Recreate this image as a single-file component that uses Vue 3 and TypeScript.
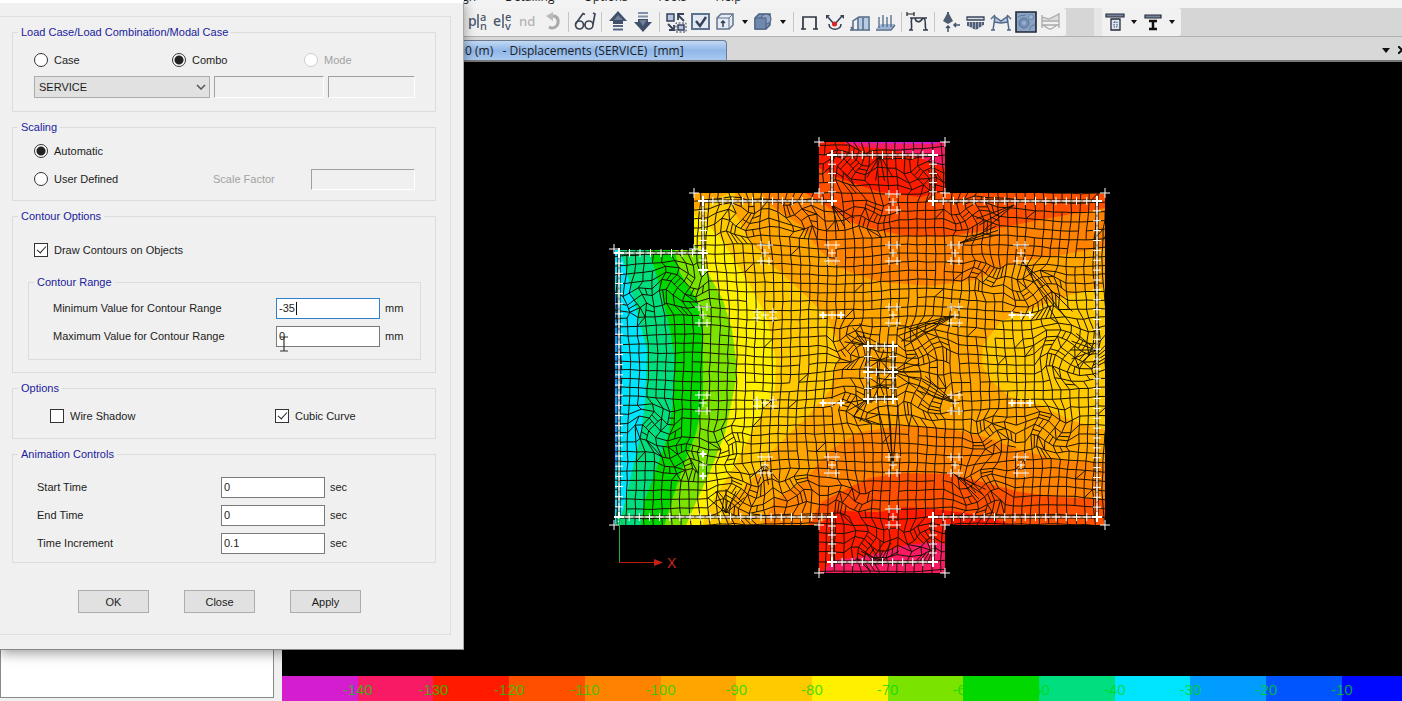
<script setup lang="ts">
import { ref } from 'vue'

type Point = [number, number]

/* ---------- dialog state ---------- */
const caseKind = ref('combo')
const scaling = ref('automatic')
const selectedCase = ref('SERVICE')
const drawContours = ref(true)
const wireShadow = ref(false)
const cubicCurve = ref(true)
const rangeMin = ref('-35')
const rangeMax = ref('0')
const times = ref([
  { id: 'start-time', label: 'Start Time', value: '0' },
  { id: 'end-time', label: 'End Time', value: '0' },
  { id: 'time-increment', label: 'Time Increment', value: '0.1' },
])
const menus = ['Design', 'Detailing', 'Options', 'Tools', 'Help']

/* ---------- toolbar ---------- */
interface Tool { kind: 'icon' | 'sep' | 'caret'; name?: string; art?: string }
const sep: Tool = { kind: 'sep' }
const caret: Tool = { kind: 'caret' }
const icon = (name: string, art: string): Tool => ({ kind: 'icon', name, art })
const glyph = (x: number, y: number, size: number, s: string, color = '#4b566b') =>
  `<text x="${x}" y="${y}" font-size="${size}" font-family="Noto Sans, sans-serif" font-weight="500" fill="${color}">${s}</text>`

const tools: Tool[] = [
  icon('Plan view', glyph(3, 16, 14, 'p') + '<path d="M13 4v14" stroke="#4b566b" stroke-width="1.5"/>' + glyph(15, 11, 11, 'a') + glyph(15, 20, 11, 'n')),
  icon('Elevation view', glyph(3, 16, 14, 'e') + '<path d="M13 4v14" stroke="#4b566b" stroke-width="1.5"/>' + glyph(15, 11, 11, 'e') + glyph(15, 20, 11, 'v')),
  icon('Named display', glyph(4, 16, 13, 'nd', '#b4b4b4')),
  icon('Undo', '<path d="M10 7c5-3 9 1 8 6s-6 6-9 4" fill="none" stroke="#aaa" stroke-width="3"/><path d="M6 6l7-4v9z" fill="#bbb"/>'),
  sep,
  icon('Perspective', '<g fill="none" stroke="#3d4656" stroke-width="1.7"><circle cx="6.5" cy="15" r="4"/><circle cx="16" cy="15" r="4"/><path d="M2.5 14L10 3.5l2 1M20 14l2-10-2-1M10.5 15h1.5"/></g>'),
  sep,
  icon('Move up in list', '<path d="M12 1l9 10h-4v3H7v-3H3z" fill="#40506b"/><path d="M12 5l5 5H8z" fill="#6e7e99"/><path d="M7 16h10M7 19.5h10" stroke="#566883" stroke-width="2"/>'),
  icon('Move down in list', '<path d="M12 22l9-10h-4V9H7v3H3z" fill="#40506b"/><path d="M8 10h8l-4 6z" fill="#6e7e99"/><path d="M7 3h10M7 6.5h10" stroke="#7e90aa" stroke-width="2"/>'),
  sep,
  icon('Object shrink', '<path d="M3 4h7v7H3zM14 15h6v5h-6z" fill="#b7c6de" stroke="#35425a" stroke-width="1.5"/><path d="M20 11l-6-6m0 5V4h6M4 14l6 6m0-5v5H5" fill="none" stroke="#35425a" stroke-width="1.8"/><path d="M12 22h10V13H12z" fill="none" stroke="#35425a" stroke-dasharray="2 1.5"/>'),
  icon('Set display options', '<rect x="3" y="4" width="17" height="15" fill="#e3e9f2" stroke="#5d7191" stroke-width="2"/><path d="M7 11l4 5 6-9" fill="none" stroke="#35425a" stroke-width="2.5"/>'),
  icon('Object view', '<path d="M3 8l4-4h12v11l-4 4H3z" fill="#e5ebf3" stroke="#60728e" stroke-width="1.5"/><path d="M3 8h12v11M15 8l4-4" fill="none" stroke="#60728e"/><path d="M9 17v-6m-2 2l2-2 2 2" fill="none" stroke="#333d50" stroke-width="1.5"/>'),
  caret,
  icon('Extruded view', '<path d="M3 8l4-4h11v11l-4 4H3z" fill="#7c93b7" stroke="#4a5f80" stroke-width="1.5"/><circle cx="14" cy="9" r="5" fill="#8fa4c4" stroke="#4a5f80"/><path d="M3 8h11v11H3z" fill="#7188ad" stroke="#4a5f80"/>'),
  caret,
  sep,
  icon('Undeformed shape', '<path d="M5 19V7h13v12M3 19h5M15 19h5" fill="none" stroke="#2e3441" stroke-width="1.7"/>'),
  icon('Joint loads', '<path d="M4 6l7 8M19 6l-7 8M6 14c0 7 12 7 12 0" fill="none" stroke="#35425a" stroke-width="1.6"/><path d="M3 5h4l-4 4zM21 5h-4l4 4z" fill="#35425a"/><circle cx="11.5" cy="14" r="2.5" fill="#d22"/>'),
  icon('Frame loads', '<path d="M10 7h10v12H10z" fill="#b8cbe5"/><path d="M2 20h20M5 20v-9l6-4h10v13M10 20V8M15 20V8M3 17l2 3" fill="none" stroke="#526987" stroke-width="1.5"/>'),
  icon('Shell loads', '<path d="M3 19l5-5h14l-4 5z" fill="#9eb5d5"/><path d="M3 20h15l4-5M6 7v11M10 5v12M14 7v10M18 5v12" fill="none" stroke="#526987" stroke-width="1.3"/>'),
  sep,
  icon('Deformed shape', '<path d="M1 4h7M1 2v4M8 2v4" stroke="#222" fill="none" stroke-width="1.2"/><path d="M4 8h17M6 8c-2 5 1 6-1 12M18 8c3 4 0 7 2 12M9 8c1 5 5 5 8 0M3 20h4M17 20h5" fill="none" stroke="#333c4c" stroke-width="1.6"/>'),
  sep,
  icon('Support reactions', '<path d="M9 2v10" stroke="#222" stroke-width="1.5"/><path d="M9 2l-5 9 5 3 5-3z" fill="#4e5c70"/><path d="M9 22v-6m-2 2l2-2 2 2M21 15h-6m2-2l-2 2 2 2" fill="none" stroke="#43536c" stroke-width="1.5"/>'),
  icon('Soil pressure', '<path d="M3 7h17v3H3z" fill="#d7dce5" stroke="#39465b" stroke-width="1.3"/><path d="M3 12h17v3l-8 5-9-4z" fill="#9aa9bf"/><path d="M4 12v4M7 12v5M10 12v7M13 12v7M16 12v5M19 12v3" stroke="#39465b" stroke-width="1.5"/>'),
  icon('Frame forces', '<path d="M4 6l8 5 7-5 1 6-8 1-7-1z" fill="#b8cbe5"/><path d="M5 6l7 5 7-5M2 20h4M18 20h4M6 7L4 20M18 7l2 13M2 9l4-4M22 9l-4-4M5 12l7 1 7-1" fill="none" stroke="#526987" stroke-width="1.5"/>'),
  icon('Shell stresses', '<path d="M2 2h20v20H2z" fill="#8ba3c3" stroke="#1f2736" stroke-width="1.6"/><circle cx="10" cy="13" r="5" fill="#7590b6" stroke="#587399"/><circle cx="10" cy="13" r="2" fill="#9bb0cd"/><circle cx="17" cy="7" r="2.5" fill="#a2b5d0" stroke="#6681a8"/><path d="M4 7c4-3 7 0 8-3M16 20c0-4 2-5 5-5" fill="none" stroke="#5d789e"/>'),
  icon('Strip forces', '<path d="M3 7l7 2 10-5v6H3z" fill="#ddd"/><path d="M3 5v13M20 3v15M3 7l7 2 10-5M3 11h17M3 15h17M3 15c4 0 5 5 9 4l8-5" fill="none" stroke="#aaa" stroke-width="1.3"/>'),
]
const designTools: Tool[] = [
  icon('Slab design', '<path d="M3 4h18v3H3z" fill="#75849d" stroke="#252b38" stroke-width="1.2"/><path d="M8 9h9v11H8z" fill="#dfe5ef" stroke="#252b38" stroke-width="1.3"/><path d="M11 12h3v5h-3z" fill="none" stroke="#354e78" stroke-dasharray="1.5 1"/>'),
  caret,
  icon('Beam design', '<path d="M4 5h16v3H4z" fill="#75849d" stroke="#252b38" stroke-width="1.2"/><path d="M8 11h8M8 19h8M12 10v9" stroke="#111" stroke-width="2.5"/>'),
  caret,
]

/* ---------- legend ---------- */
const bands = [
  { color: '#d51dd0', label: '-140' }, { color: '#f81a64', label: '-130' },
  { color: '#ff1a00', label: '-120' }, { color: '#ff5000', label: '-110' },
  { color: '#ff8200', label: '-100' }, { color: '#ffa500', label: '-90' },
  { color: '#ffca00', label: '-80' }, { color: '#fff000', label: '-70' },
  { color: '#7ae300', label: '-60' }, { color: '#00d800', label: '-50' },
  { color: '#00df80', label: '-40' }, { color: '#00e5ff', label: '-30' },
  { color: '#009cff', label: '-20' }, { color: '#0055ff', label: '-10' },
]

/* ---------- contour plot ---------- */
const outline = '615,250 694,250 694,193 819,193 819,142 945,142 945,193 1105,193 1105,525 945,525 945,573 819,573 819,525 615,525'

// Each area is painted over the previous one.
const areas = [
  { color: '#ffca00', pts: '610,250 735,190 735,213 750,240 770,263 800,290 827,317 837,340 838,360 830,390 807,417 773,450 757,473 733,500 723,530 610,530' },
  { color: '#fff000', pts: '610,250 694,230 694,215 705,222 722,240 747,280 767,317 776,360 775,390 760,417 743,450 730,473 713,500 700,530 610,530' },
  { color: '#7ae300', pts: '610,240 697,245 700,253 708,273 723,300 732,330 736,360 736,380 732,400 725,433 712,467 697,500 684,530 610,530' },
  { color: '#00d800', pts: '610,240 672,240 680,273 697,300 703,330 703,400 696,433 683,467 672,500 663,530 610,530' },
  { color: '#00df80', pts: '610,240 645,240 656,273 663,300 670,330 675,360 673,400 669,433 657,467 645,500 640,530 610,530' },
  { color: '#00e5ff', pts: '610,250 620,250 627,273 638,317 647,350 645,400 641,433 633,467 623,510 618,525 610,525' },
  { color: '#009cff', pts: '610,270 618,300 622,350 622,400 618,460 610,490' },
  { color: '#ffca00', pts: '1110,286 1070,295 1040,306 1000,322 983,345 982,365 990,380 1010,397 1040,405 1070,420 1110,431' },
  { color: '#ff8200', pts: '760,190 770,205 800,225 820,250 835,265 850,272 880,282 930,286 975,280 1000,268 1020,262 1060,255 1110,247 1110,130 760,130' },
  { color: '#ff5000', pts: '800,190 825,205 850,222 870,228 905,236 945,237 990,230 1050,218 1110,207 1110,130 800,130' },
  { color: '#ff1a00', pts: '815,165 830,175 850,182 880,192 920,197 950,190 950,130 815,130' },
  { color: '#f81a64', pts: '840,140 850,146 890,149 915,156 930,162 950,170 950,130 840,130' },
  { color: '#d51dd0', pts: '850,140 850,143 935,144 945,140' },
  { color: '#ff8200', pts: '760,530 775,500 805,480 830,450 860,432 905,425 950,429 985,437 1020,450 1060,460 1110,463 1110,580 760,580' },
  { color: '#ff5000', pts: '805,530 822,502 850,487 870,478 900,473 950,474 990,484 1020,492 1060,497 1110,500 1110,580 805,580' },
  { color: '#ff1a00', pts: '815,530 835,510 860,512 880,512 905,507 935,509 980,515 1020,527 950,580 815,580' },
  { color: '#f81a64', pts: '819,575 833,560 860,557 880,553 905,545 935,542 950,545 950,580' },
]

// Local rotations of the mesh: x, y, radius, angle
const swirls: number[][] = [
  [738, 218, 26, .8], [680, 285, 28, .9], [655, 425, 26, .9], [635, 300, 20, -.7], [740, 497, 30, .8],
  [800, 215, 24, -.8], [1070, 350, 38, .8], [1035, 290, 30, -.8], [985, 275, 22, .7],
  [850, 165, 26, .9], [920, 175, 22, -.9], [870, 215, 24, .6], [970, 215, 26, -.7], [1050, 430, 28, .8],
  [990, 435, 24, -.7], [925, 395, 30, .7], [850, 345, 24, -.9], [855, 405, 24, .8], [925, 345, 28, -.7],
  [870, 545, 24, .8], [920, 540, 22, -.9], [850, 500, 22, .7], [980, 490, 30, -.8], [725, 440, 22, -.6],
  [795, 490, 22, -.8], [680, 460, 22, -.7],
]
const noise = (i: number, j: number) => {
  const v = Math.sin(i * 127.1 + j * 311.7) * 43758.5453
  return v - Math.floor(v) - 0.5
}
function node(i: number, j: number): Point {
  let x = 610 + i * 9
  let y = 138 + j * 9
  const bx = x
  const by = y
  x += 2 * Math.sin(by / 34 + bx / 70) + Math.sin(by / 19 + bx / 31) + noise(i, j)
  y += 2 * Math.sin(bx / 37 + by / 60) + Math.sin(bx / 20 - by / 29) + noise(j + 90, i)
  for (const [cx, cy, r, a] of swirls) {
    const dx = x - cx
    const dy = y - cy
    const d = Math.hypot(dx, dy)
    if (d < r) {
      const t = a * (1 - (d / r) ** 2)
      x = cx + dx * Math.cos(t) - dy * Math.sin(t)
      y = cy + dx * Math.sin(t) + dy * Math.cos(t)
    }
  }
  return [x, y]
}
function buildMesh(): string {
  const out: string[] = []
  const seg = (a: Point, b: Point) => out.push(`M${a[0].toFixed(1)} ${a[1].toFixed(1)}L${b[0].toFixed(1)} ${b[1].toFixed(1)}`)
  const mid = (a: Point, b: Point): Point => [(a[0] + b[0]) / 2, (a[1] + b[1]) / 2]
  for (let i = 0; i < 56; i++) {
    for (let j = 0; j < 49; j++) {
      const a = node(i, j)
      const b = node(i + 1, j)
      const c = node(i + 1, j + 1)
      const d = node(i, j + 1)
      if (noise(i * 3, j) < 0.48) seg(a, b)
      if (noise(i, j * 5) < 0.48) seg(a, d)
      const dense = swirls.some(([x, y, r]) => Math.hypot(a[0] - x, a[1] - y) < r * 0.8)
      const n = noise(i + 7, j + 3)
      if (dense && n > 0.35) seg(a, c)
      else if (dense && n > 0.1) seg(mid(a, b), mid(c, d))
      else if (dense && n < -0.35) seg(mid(a, d), mid(b, c))
      else if (n > 0.48) seg(b, d)
    }
  }
  return out.join('')
}
// Fans of elements: x, y, start angle, end angle, count, length
const fans: number[][] = [
  [955, 315, 148, 166, 4, 60], [955, 403, 198, 222, 4, 40], [893, 465, 255, 275, 3, 60], [832, 205, 30, 75, 4, 26],
  [880, 155, 60, 120, 4, 26], [726, 513, 220, 320, 5, 24], [765, 465, 50, 140, 4, 20], [960, 243, 335, 348, 3, 40],
  [1014, 205, 140, 160, 3, 40], [1023, 262, 45, 60, 3, 70], [868, 346, 190, 250, 4, 24], [868, 399, 110, 170, 4, 24],
  [893, 372, 325, 395, 5, 28], [880, 562, 210, 330, 5, 22], [1096, 350, 140, 220, 5, 26], [955, 475, 25, 45, 3, 34],
  [880, 360, 0, 340, 8, 16], [880, 385, 20, 360, 8, 16],
]
const fanPath = fans.map(([x, y, a, b, n, len]) => Array.from({ length: n }, (_, k) => {
  const t = ((a + ((b - a) * k) / (n - 1)) * Math.PI) / 180
  return `M${x} ${y}l${(Math.cos(t) * len).toFixed(1)} ${(Math.sin(t) * len).toFixed(1)}`
}).join('')).join('')
const meshPath = buildMesh() + fanPath

const cross = (x: number, y: number, s = 4) => `M${x - s} ${y}h${2 * s}M${x} ${y - s}v${2 * s}`

const walls: number[][] = [
  [703, 201, 832, 201], [832, 155, 832, 201], [832, 155, 933, 155], [933, 155, 933, 201], [933, 201, 1097, 201],
  [1097, 201, 1097, 517], [933, 517, 1097, 517], [933, 517, 933, 562], [832, 562, 933, 562], [832, 517, 832, 562],
  [619, 517, 832, 517], [619, 253, 619, 517], [619, 253, 703, 253], [703, 201, 703, 270],
  [868, 346, 893, 346], [868, 399, 893, 399], [868, 346, 868, 399], [893, 346, 893, 399], [868, 372, 893, 372],
]
const wallLines = walls.map(([a, b, c, d]) => `M${a} ${b}L${c} ${d}`).join('')
const wallTicks = walls.map(([a, b, c, d]) => {
  const length = Math.hypot(c - a, d - b)
  const n = Math.max(2, Math.round(length / 10))
  return Array.from({ length: n + 1 }, (_, k) => cross(a + ((c - a) * k) / n, b + ((d - b) * k) / n)).join('')
}).join('')
const wallEnds = walls.map(([a, b, c, d]) => cross(a, b, 5) + cross(c, d, 5)).join('')

const tallColumns: Point[] = [
  [765, 253], [832, 253], [893, 253], [955, 253], [1021, 253], [703, 315], [893, 315], [955, 315], [703, 403],
  [955, 403], [765, 465], [832, 465], [893, 465], [955, 465], [1021, 465], [893, 202], [893, 517],
]
const wideColumns: Point[] = [[765, 315], [765, 403]]
const flatColumns: Point[] = [[832, 315], [832, 403], [1021, 315], [1021, 403]]
const columnMarks = [
  ...tallColumns.map(([x, y]) => cross(x, y) + cross(x - 4, y - 8) + cross(x + 4, y - 8) + cross(x - 4, y + 8) + cross(x + 4, y + 8)),
  ...wideColumns.map(([x, y]) => cross(x, y) + cross(x - 8, y - 3) + cross(x + 8, y - 3) + cross(x - 8, y + 3) + cross(x + 8, y + 3)),
  ...flatColumns.map(([x, y]) => cross(x, y) + cross(x - 9, y) + cross(x + 9, y) + `M${x - 12} ${y}h24`),
  cross(703, 454), cross(703, 465), cross(703, 476),
].join('')
const boldMarks = [
  ...flatColumns.map(([x, y]) => cross(x - 9, y, 3) + cross(x + 9, y, 3)),
  cross(703, 454, 3), cross(703, 476, 3),
].join('')
const corners: Point[] = [
  [614, 249], [694, 249], [694, 193], [819, 193], [819, 142], [945, 142], [945, 193],
  [1105, 193], [1105, 525], [945, 525], [945, 573], [819, 573], [819, 525], [614, 525],
]
const cornerMarks = corners.map(([x, y]) => cross(x, y, 5)).join('')
</script>

<template>
  <div class="app">
    <header class="top">
      <nav class="menus" aria-label="Main menu">
        <span v-for="m in menus" :key="m">{{ m }}</span>
      </nav>
      <div class="bars">
        <div v-for="(group, g) in [tools, designTools]" :key="g" class="bar" :class="{ grip: g === 1 }">
          <template v-for="(t, k) in group" :key="k">
            <i v-if="t.kind === 'sep'" class="sep"></i>
            <button v-else-if="t.kind === 'caret'" type="button" class="caret" aria-label="More">
              <svg viewBox="0 0 6 4" width="6" height="4"><path d="M0 0h6L3 4z" fill="#111" /></svg>
            </button>
            <button v-else type="button" class="tool" :aria-label="t.name">
              <svg viewBox="0 0 24 24" width="24" height="24" v-html="t.art"></svg>
            </button>
          </template>
        </div>
      </div>
      <div class="tabs">
        <button type="button" class="tab">0 (m) &nbsp; - Displacements (SERVICE) &nbsp;[mm]</button>
        <div class="tab-tools">
          <button type="button" class="caret" aria-label="Window list">
            <svg viewBox="0 0 8 5" width="8" height="5"><path d="M0 0h8L4 5z" fill="#111" /></svg>
          </button>
          <button type="button" class="caret" aria-label="Close window">
            <svg viewBox="0 0 8 8" width="8" height="8"><path d="M0 0l8 8M8 0L0 8" stroke="#111" stroke-width="2" /></svg>
          </button>
        </div>
      </div>
    </header>

    <div class="work">
      <aside class="explorer"><div class="tree"></div></aside>
      <main class="view">
        <svg class="plot" viewBox="282 62 1120 614" preserveAspectRatio="xMinYMin meet" role="img" aria-label="Displacement contours">
          <defs><clipPath id="slab"><polygon :points="outline" /></clipPath></defs>
          <g clip-path="url(#slab)">
            <polygon :points="outline" fill="#ffa500" />
            <polygon v-for="(a, k) in areas" :key="k" :points="a.pts" :fill="a.color" />
            <path :d="meshPath" class="mesh" />
            <path :d="wallLines" class="wall-edge" />
          </g>
          <path :d="wallLines" class="wall" />
          <path :d="wallTicks" class="mark" />
          <path :d="wallEnds" class="mark strong" />
          <path :d="columnMarks" class="mark" />
          <path :d="boldMarks" class="mark strong" />
          <path :d="cornerMarks" class="mark" />
          <path d="M619.5 562V518M615.5 525l4-7 4 7" stroke="#20b038" fill="none" />
          <path d="M619 562.5h38" stroke="#b81d12" />
          <path d="M654 559l9 3.5-9 3.5z" fill="#c82014" />
          <text x="667" y="568" class="axis">X</text>
        </svg>
        <div class="legend">
          <div v-for="b in bands" :key="b.label" class="band" :style="{ background: b.color }">
            <span>{{ b.label }}</span>
          </div>
          <div class="band last"></div>
        </div>
      </main>
    </div>

    <form class="dialog" @submit.prevent>
      <div class="frame">
        <fieldset class="box cases">
          <legend>Load Case/Load Combination/Modal Case</legend>
          <div class="kinds">
            <label><input v-model="caseKind" type="radio" name="kind" value="case" />Case</label>
            <label><input v-model="caseKind" type="radio" name="kind" value="combo" />Combo</label>
            <label class="off"><input v-model="caseKind" type="radio" name="kind" value="mode" disabled />Mode</label>
          </div>
          <div class="pickers">
            <div class="select">
              <select v-model="selectedCase" aria-label="Load combination"><option>SERVICE</option></select>
              <svg viewBox="0 0 10 6" width="10" height="6"><path d="M1 1l4 4 4-4" fill="none" stroke="#555" stroke-width="1.5" /></svg>
            </div>
            <input class="sunk" type="text" disabled aria-label="Step type" />
            <input class="sunk" type="text" disabled aria-label="Mode number" />
          </div>
        </fieldset>

        <fieldset class="box scaling">
          <legend>Scaling</legend>
          <div class="row"><label><input v-model="scaling" type="radio" name="scaling" value="automatic" />Automatic</label></div>
          <div class="row scale">
            <label><input v-model="scaling" type="radio" name="scaling" value="user" />User Defined</label>
            <label class="off" for="factor">Scale Factor</label>
            <input id="factor" class="sunk" type="text" disabled />
          </div>
        </fieldset>

        <fieldset class="box contours">
          <legend>Contour Options</legend>
          <label><input v-model="drawContours" type="checkbox" />Draw Contours on Objects</label>
          <fieldset class="box range">
            <legend>Contour Range</legend>
            <div class="row">
              <label for="range-min">Minimum Value for Contour Range</label>
              <span class="field">
                <input id="range-min" v-model="rangeMin" class="focus" type="text" />
                <i class="text-caret"></i>
              </span>
              <span>mm</span>
            </div>
            <div class="row">
              <label for="range-max">Maximum Value for Contour Range</label>
              <span class="field">
                <input id="range-max" v-model="rangeMax" type="text" />
                <svg class="pointer" viewBox="0 0 8 16" width="8" height="16"><path d="M0 1h8M4 1v14M0 15h8" fill="none" stroke="#333" stroke-width="1.2" /></svg>
              </span>
              <span>mm</span>
            </div>
          </fieldset>
        </fieldset>

        <fieldset class="box options">
          <legend>Options</legend>
          <div class="checks">
            <label><input v-model="wireShadow" type="checkbox" />Wire Shadow</label>
            <label><input v-model="cubicCurve" type="checkbox" />Cubic Curve</label>
          </div>
        </fieldset>

        <fieldset class="box animation">
          <legend>Animation Controls</legend>
          <div v-for="t in times" :key="t.id" class="row">
            <label :for="t.id">{{ t.label }}</label>
            <input :id="t.id" v-model="t.value" type="text" />
            <span>sec</span>
          </div>
        </fieldset>

        <div class="actions">
          <button type="submit">OK</button>
          <button type="button">Close</button>
          <button type="button">Apply</button>
        </div>
      </div>
    </form>
  </div>
</template>

<style>
body { margin: 0; background: #d8d8d8; }
</style>

<style scoped>
* { box-sizing: border-box; }
.app {
  position: relative;
  display: flex;
  flex-direction: column;
  min-height: 100vh;
  overflow: hidden;
  font: 11px/14px "Liberation Sans", Arial, sans-serif;
  color: #1c1c1c;
}
button { font: inherit; color: inherit; padding: 0; }

/* top bars */
.menus {
  display: flex;
  align-items: flex-end;
  gap: 29px;
  height: 8px;
  padding: 0 0 3px 438px;
  overflow: hidden;
  background: #f3f3f3;
  font: 12px/16px "Open Sans", sans-serif;
}
.bars { display: flex; gap: 28px; height: 28px; padding-left: 464px; background: #d6d6d6; }
.bar { display: flex; align-items: center; padding-right: 3px; background: #f1f1f1; border-radius: 0 3px 3px 0; }
.grip { border-left: 8px solid #e6e6e6; }
.tool, .caret { display: flex; align-items: center; justify-content: center; border: 0; background: none; }
.tool { width: 25px; height: 26px; }
.caret { width: 13px; height: 20px; }
.sep { width: 8px; height: 20px; background: linear-gradient(#c6c6c6, #c6c6c6) center / 1px 100% no-repeat; }
.tabs {
  display: flex;
  align-items: flex-end;
  justify-content: space-between;
  height: 26px;
  padding-left: 452px;
  border-top: 1px solid #b0b0b0;
  border-bottom: 2px solid #777;
  background: #d8d8d8;
  overflow: hidden;
}
.tab {
  height: 20px;
  padding: 0 42px 0 12px;
  border: 1px solid #6d7b91;
  border-bottom: 0;
  border-radius: 0 4px 0 0;
  background: linear-gradient(#c3d9f4, #8fb7e8 50%, #a9c9f0);
  font: 12px/18px "Open Sans", sans-serif;
  white-space: nowrap;
}
.tab-tools { display: flex; gap: 3px; margin-right: -6px; }

/* work area */
.work { flex: 1; display: flex; }
.explorer { width: 282px; padding: 0 8px 3px 0; background: #f0f0f0; display: flex; }
.tree { flex: 1; border: 1px solid #8a8a8a; background: #fff; }
.view { flex: 1; display: flex; flex-direction: column; min-width: 0; background: #000; }
.plot { flex: 1; width: 100%; min-height: 0; display: block; }
.mesh { fill: none; stroke: #1a1200; stroke-width: 1; }
.wall-edge { fill: none; stroke: #1a1200; stroke-width: 4; stroke-opacity: .6; }
.wall { fill: none; stroke: #e8e8e8; stroke-width: 1; }
.mark { fill: none; stroke: #fff; stroke-width: 1; }
.strong { stroke-width: 2; }
.axis { font: 14px "Liberation Sans", sans-serif; fill: #d0261a; }
.legend { display: flex; height: 25px; overflow: hidden; }
.band { position: relative; flex: 757 0 0; }
.last { flex-grow: 602; background: #0008ff; }
.band span {
  position: absolute;
  right: 0;
  top: 5px;
  z-index: 1;
  transform: translateX(50%);
  font: 15px/17px "Liberation Sans", sans-serif;
  color: rgba(0, 216, 0, .75);
}

/* dialog */
.dialog {
  position: absolute;
  left: 0;
  top: 0;
  width: 464px;
  padding: 13px 12px 14px 0;
  border-top: 3px solid #fff;
  border-right: 1px solid #aaa;
  border-bottom: 1px solid #888;
  background: #f0f0f0;
  box-shadow: 0 3px 12px rgba(0, 0, 0, .4);
}
.frame {
  display: flex;
  flex-direction: column;
  gap: 8px;
  padding: 8px 14px 21px 12px;
  border: solid #dfdfdf;
  border-width: 1px 1px 1px 0;
}
.box { --indent: 21px; min-width: 0; margin: 0; padding-left: var(--indent); border: 1px solid #dcdcdc; }
legend { height: 14px; margin-left: calc(5px - var(--indent)); padding: 0 3px; color: #1b1b9c; }
label { display: flex; align-items: center; height: 20px; white-space: nowrap; }
.off { color: #a2a2a2; }
.row { display: grid; align-items: center; height: 28px; }

input { margin: 0; font: inherit; color: inherit; border-radius: 0; }
input[type="text"] {
  display: block;
  width: 100%;
  height: 21px;
  padding: 0 2px;
  border: 1px solid #7a7a7a;
  background: #fff;
}
input.focus { border-color: #2f80cc; outline: none; }
input[type="text"].sunk { border-color: #a0a0a0 #fff #fff #a0a0a0; background: #f0f0f0; }
input[type="radio"], input[type="checkbox"] {
  appearance: none;
  position: relative;
  flex: none;
  width: 14px;
  height: 14px;
  margin-right: 6px;
  border: 1px solid #333;
  background: #fff;
}
input[type="radio"] { border-radius: 50%; }
input[type="radio"]:disabled { border-color: #ccc; }
input[type="radio"]:checked { background: radial-gradient(circle, #222 0 4px, #fff 5px); }
input[type="checkbox"]:checked::after {
  content: "";
  position: absolute;
  left: 4px;
  top: 0;
  width: 4px;
  height: 8px;
  border: solid #222;
  border-width: 0 1px 1px 0;
  transform: rotate(42deg);
}

.cases { padding-block: 11px 13px; padding-right: 20px; }
.kinds { display: grid; grid-template-columns: 138px 132px 1fr; margin-bottom: 6px; }
.pickers { display: grid; grid-template-columns: 176px 110px 87px; gap: 4px; }
.pickers input[type="text"] { height: 22px; }
.select { position: relative; }
.select select {
  appearance: none;
  display: block;
  width: 100%;
  height: 22px;
  padding: 0 4px;
  border: 1px solid #adadad;
  border-radius: 0;
  background: #e1e1e1;
  font: inherit;
  color: inherit;
}
.select svg { position: absolute; right: 4px; top: 8px; pointer-events: none; }

.scaling { padding-block: 3px 7px; padding-right: 20px; }
.scale { grid-template-columns: 179px 98px 104px; }

.contours { --indent: 15px; padding-block: 17px 12px; padding-right: 14px; }
.contours > label { margin: 0 0 15px 6px; }
.range { --indent: 24px; padding-block: 5px 9px; padding-right: 15px; }
.range .row { grid-template-columns: 223px 104px auto; }
.range .row > span:last-child, .animation .row > span { padding-left: 5px; }
.field { position: relative; }
.text-caret { position: absolute; left: 20px; top: 4px; width: 1px; height: 13px; background: #111; }
.pointer { position: absolute; left: 4px; top: 10px; }

.options { --indent: 37px; padding-block: 11px 12px; padding-right: 20px; }
.checks { display: grid; grid-template-columns: 225px 1fr; }

.animation { --indent: 24px; padding-block: 12px 5px; padding-right: 20px; }
.animation .row { grid-template-columns: 184px 104px auto; }

.actions { display: flex; gap: 35px; margin-top: 19px; padding-left: 66px; }
.actions button { width: 71px; height: 23px; border: 1px solid #adadad; background: #e1e1e1; }
</style>
